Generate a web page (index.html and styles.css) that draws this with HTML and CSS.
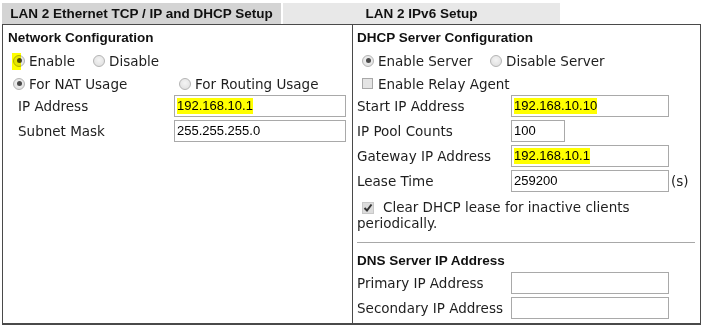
FILE: index.html
```html
<!DOCTYPE html>
<html lang="en">
<head>
    <meta charset="UTF-8">
    <title>LAN 2 Setup</title>
    <link rel="stylesheet" href="styles.css">
</head>
<body>
    <div class="page">
        <div class="tabs">
            <div class="tab tab-active">LAN 2 Ethernet TCP / IP and DHCP Setup</div>
            <div class="tab tab-idle">LAN 2 IPv6 Setup</div>
        </div>

        <div class="panel">
            <!-- left: network configuration -->
            <div class="col col-left">
                <div class="head">Network Configuration</div>
                <div class="opt-row">
                    <span class="opt opt-enable"><span class="radio checked marked"></span>Enable</span>
                    <span class="opt"><span class="radio"></span>Disable</span>
                </div>
                <div class="opt-row">
                    <span class="opt opt-nat"><span class="radio checked"></span>For NAT Usage</span>
                    <span class="opt"><span class="radio"></span>For Routing Usage</span>
                </div>
                <div class="field-row">
                    <span class="label">IP Address</span>
                    <div class="input input-wide"><span class="hl">192.168.10.1</span></div>
                </div>
                <div class="field-row">
                    <span class="label">Subnet Mask</span>
                    <div class="input input-wide">255.255.255.0</div>
                </div>
            </div>

            <!-- right: dhcp server -->
            <div class="col col-right">
                <div class="head">DHCP Server Configuration</div>
                <div class="opt-row">
                    <span class="opt opt-server"><span class="radio checked"></span>Enable Server</span>
                    <span class="opt"><span class="radio"></span>Disable Server</span>
                </div>
                <div class="opt-row">
                    <span class="opt"><span class="check"></span>Enable Relay Agent</span>
                </div>
                <div class="field-row">
                    <span class="label">Start IP Address</span>
                    <div class="input"><span class="hl">192.168.10.10</span></div>
                </div>
                <div class="field-row">
                    <span class="label">IP Pool Counts</span>
                    <div class="input input-short">100</div>
                </div>
                <div class="field-row">
                    <span class="label">Gateway IP Address</span>
                    <div class="input"><span class="hl">192.168.10.1</span></div>
                </div>
                <div class="field-row">
                    <span class="label">Lease Time</span>
                    <div class="input">259200</div>
                    <span class="unit">(s)</span>
                </div>
                <div class="clear-lease">
                    <span class="check checked">
                        <svg width="10" height="10" viewBox="0 0 10 10"><path d="M1.5 5 L4 7.5 L8.5 1.5" fill="none" stroke="#333" stroke-width="2"/></svg>
                    </span>Clear DHCP lease for inactive clients periodically.
                </div>
                <div class="divider"></div>
                <div class="head">DNS Server IP Address</div>
                <div class="field-row">
                    <span class="label">Primary IP Address</span>
                    <div class="input"></div>
                </div>
                <div class="field-row">
                    <span class="label">Secondary IP Address</span>
                    <div class="input"></div>
                </div>
            </div>
        </div>
    </div>
</body>
</html>
```

FILE: styles.css
```css
* {
    margin: 0;
    padding: 0;
    box-sizing: border-box;
}

body {
    font-family: 'DejaVu Sans', Verdana, sans-serif;
    font-size: 13.5px;
    color: #1e1e1e;
    background: #fff;
}

.page {
    width: 702px;
    padding-left: 2px;
}

.tabs {
    display: flex;
    height: 24px;
}

.tab {
    margin-top: 3px;
    height: 21px;
    line-height: 21px;
    text-align: center;
    font-family: 'Liberation Sans', Arial, sans-serif;
    font-weight: bold;
    font-size: 13.5px;
    color: #111;
}

.tab-active {
    width: 279px;
    background: #d4d4d4;
}

.tab-idle {
    width: 277px;
    margin-left: 2px;
    background: #e8e8e8;
}

.panel {
    display: flex;
    width: 699px;
    height: 301px;
    border: 1px solid #4a4a4a;
    border-bottom-width: 2px;
}

.col {
    padding-top: 1px;
}

.col-left {
    width: 350px;
    border-right: 1px solid #4a4a4a;
    padding-left: 5px;
}

.col-right {
    flex: 1;
    padding-left: 4px;
}

.head {
    height: 23px;
    line-height: 23px;
    font-family: 'Liberation Sans', Arial, sans-serif;
    font-weight: bold;
    font-size: 13.5px;
    color: #111;
}

.opt-row {
    display: flex;
    align-items: center;
    height: 23px;
    padding-left: 5px;
}

.opt {
    display: flex;
    align-items: center;
}

.opt-enable {
    width: 80px;
}

.opt-nat {
    width: 166px;
}

.opt-server {
    width: 128px;
}

.radio {
    position: relative;
    width: 12px;
    height: 12px;
    margin-right: 4px;
    border-radius: 50%;
    border: 1px solid #b4b4b4;
    background: radial-gradient(circle at 50% 40%, #f4f4f4 0%, #dcdcdc 100%);
}

.radio.checked::after {
    content: "";
    position: absolute;
    left: 2.5px;
    top: 2.5px;
    width: 5px;
    height: 5px;
    border-radius: 50%;
    background: #4a4a4a;
}

/* highlighter mark drawn over the enable radio */
.radio.marked::before {
    content: "";
    position: absolute;
    left: -2px;
    top: -3px;
    width: 9px;
    height: 17px;
    background: #ffff00;
    mix-blend-mode: multiply;
    z-index: 2;
}

.check {
    display: inline-flex;
    align-items: center;
    justify-content: center;
    width: 11px;
    height: 11px;
    margin-right: 5px;
    border: 1px solid #a8a8a8;
    background: #e4e4e4;
    vertical-align: -1px;
}

.field-row {
    display: flex;
    align-items: flex-start;
    height: 25px;
}

.label {
    line-height: 22px;
}

.col-left .field-row {
    padding-left: 10px;
}

.col-left .label {
    width: 156px;
}

.col-right .label {
    width: 154px;
}

.input {
    width: 158px;
    height: 22px;
    padding: 0 2px;
    border: 1px solid #a9a9a9;
    font-family: 'Liberation Sans', Arial, sans-serif;
    font-size: 13px;
    line-height: 20px;
    color: #000;
}

.input-wide {
    width: 172px;
}

.input-short {
    width: 54px;
}

.hl {
    display: inline-block;
    line-height: 16px;
    background: #ffff00;
}

.unit {
    margin-left: 2px;
    line-height: 22px;
}

.clear-lease {
    margin-top: 4px;
    line-height: 16px;
    padding-right: 6px;
}

.clear-lease .check {
    width: 12px;
    height: 12px;
    margin-left: 5px;
    margin-right: 9px;
    border: 1px solid #c8c8c8;
    background: #dcdcdc;
}

.divider {
    margin: 11px 5px 6px 0;
    border-top: 1px solid #a8a8a8;
}
```
